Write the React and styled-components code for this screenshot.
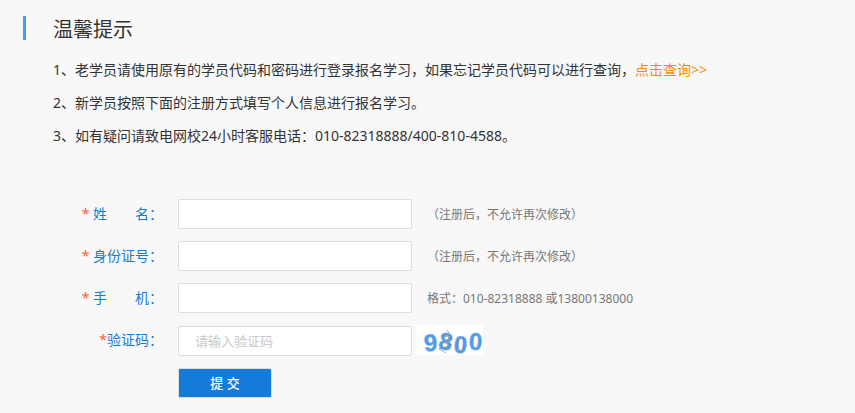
import React, { useState } from 'react';
import styled, { createGlobalStyle } from 'styled-components';

const fields = [
  { name: 'name', label: '姓\u3000\u3000名：', hint: '（注册后，不允许再次修改）' },
  { name: 'idCard', label: '身份证号：', hint: '（注册后，不允许再次修改）' },
  { name: 'phone', label: '手\u3000\u3000机：', hint: '格式：010-82318888 或13800138000' },
];

const GlobalStyle = createGlobalStyle`
  * {
    box-sizing: border-box;
  }
  body {
    margin: 0;
    background-color: #f8f8f8;
    color: #333;
    font-family: "Noto Sans", "Noto Sans CJK SC", sans-serif;
    font-size: 14px;
  }
`;

const Page = styled.main`
  padding: 16px 23px 15px;
`;

const Title = styled.h1`
  height: 24px;
  margin: 0 0 13px;
  padding-left: 27px;
  border-left: 3px solid #459df5;
  font-size: 20px;
  font-weight: normal;
  line-height: 28px;
`;

const Tips = styled.div`
  padding-left: 30px;
`;

const Tip = styled.p`
  margin: 0;
  line-height: 33px;
`;

const QueryLink = styled.a`
  color: #ff8a00;
  text-decoration: none;
`;

const Form = styled.form`
  display: flex;
  flex-direction: column;
  gap: 12px;
  margin-top: 47px;
`;

const Row = styled.div`
  display: grid;
  grid-template-columns: 140px 234px 1fr;
  column-gap: 15px;
  align-items: center;
  height: 30px;
`;

const Label = styled.label`
  color: #157bd8;
  line-height: 30px;
  text-align: right;
  white-space: pre;
`;

const Star = styled.span`
  color: #ff5f3c;
`;

const Input = styled.input`
  width: 100%;
  height: 30px;
  padding: 0 16px;
  border: 1px solid #ddd;
  border-radius: 2px;
  background-color: #fff;
  color: #333;
  font: inherit;
  font-size: 13px;
  outline: none;
  &::placeholder {
    color: #c8c8c8;
  }
  &:focus {
    border-color: #459df5;
  }
`;

const Hint = styled.span`
  color: #777;
  font-size: 12px;
  white-space: nowrap;
`;

const CodeRow = styled(Row)`
  height: 31px;
  align-items: start;
  ${Input} {
    align-self: end;
  }
`;

const Captcha = styled.svg`
  display: block;
  width: 67px;
  height: 30px;
  margin-left: -11px;
  background-color: #fff;
  overflow: visible;
`;

const Submit = styled.button`
  grid-column: 2;
  justify-self: start;
  width: 94px;
  height: 30px;
  padding: 0 0 2px;
  border: 1px solid #ddd;
  border-radius: 2px;
  background-color: #157bd8;
  color: #fff;
  font: inherit;
  font-size: 13px;
  font-weight: 500;
  cursor: pointer;
  &:hover {
    background-color: #1069bb;
  }
`;

const CaptchaImage = () => (
  <Captcha viewBox="0 0 67 30" role="img" aria-label="验证码">
    <g
      fill="#459df5"
      stroke="#93a9bd"
      strokeWidth="0.8"
      strokeDasharray="2 1"
      fontFamily="Liberation Sans"
      fontWeight="bold"
      fontSize="24"
    >
      <text x="8" y="26" transform="rotate(-4 15 18)">9</text>
      <text x="23" y="25" transform="rotate(12 30 17)">8</text>
      <text x="38" y="28" transform="rotate(6 45 19)">0</text>
      <text x="53" y="25" transform="rotate(3 60 17)">0</text>
    </g>
    <g fill="none" stroke="#7d8b99" strokeWidth="0.7">
      <path d="M31 5 L33 8 M25 10 L35 13 L26 17 L36 20 L23 24 L30 28" />
      <path d="M43 14 L42 22 L45 27 M47 13 L48 21 L46 26" />
    </g>
  </Captcha>
);

const App = () => {
  const [values, setValues] = useState({ name: '', idCard: '', phone: '', code: '' });
  const onChange = (e) => {
    setValues({ ...values, [e.target.name]: e.target.value });
  };
  return (
    <Page lang="zh-CN">
      <GlobalStyle />
      <Title>温馨提示</Title>
      <Tips>
        <Tip>
          1、老学员请使用原有的学员代码和密码进行登录报名学习，如果忘记学员代码可以进行查询，
          <QueryLink href="#query">点击查询&gt;&gt;</QueryLink>
        </Tip>
        <Tip>2、新学员按照下面的注册方式填写个人信息进行报名学习。</Tip>
        <Tip>3、如有疑问请致电网校24小时客服电话：010-82318888/400-810-4588。</Tip>
      </Tips>
      <Form onSubmit={(e) => e.preventDefault()}>
        {fields.map(({ name, label, hint }) => (
          <Row key={name}>
            <Label htmlFor={name}><Star>*</Star> {label}</Label>
            <Input id={name} name={name} value={values[name]} onChange={onChange} />
            <Hint>{hint}</Hint>
          </Row>
        ))}
        <CodeRow>
          <Label htmlFor="code"><Star>*</Star>验证码：</Label>
          <Input
            id="code"
            name="code"
            placeholder="请输入验证码"
            value={values.code}
            onChange={onChange}
          />
          <CaptchaImage />
        </CodeRow>
        <Row>
          <Submit type="submit">提 交</Submit>
        </Row>
      </Form>
    </Page>
  );
};

export default App;
